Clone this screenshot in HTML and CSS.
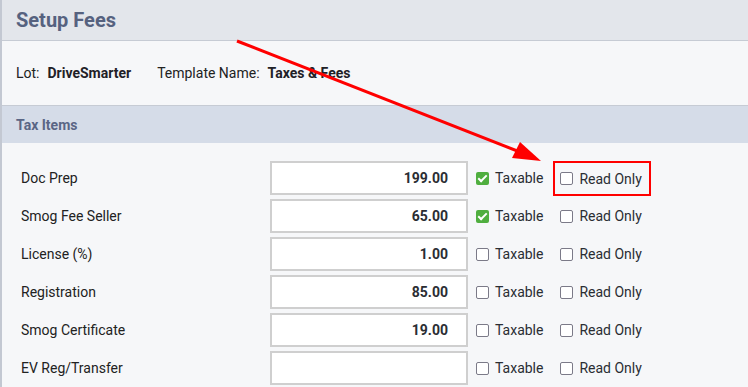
FILE: index.html
```html
<!DOCTYPE html>
<html lang="en">
<head>
    <meta charset="UTF-8">
    <title>Setup Fees</title>
    <link rel="stylesheet" href="styles.css">
</head>
<body>
    <div class="panel">
        <!-- Cabeçalho -->
        <div class="panel-header">
            <h1>Setup Fees</h1>
        </div>

        <!-- Lot / Template -->
        <div class="info-row">
            <span class="info-label">Lot:</span>
            <span class="info-value">DriveSmarter</span>
            <span class="info-label template">Template Name:</span>
            <span class="info-value">Taxes &amp; Fees</span>
        </div>

        <div class="section-bar">Tax Items</div>

        <!-- Itens -->
        <div class="items">
            <div class="item">
                <span class="item-name">Doc Prep</span>
                <div class="amount">199.00</div>
                <label class="check"><span class="box checked"></span>Taxable</label>
                <label class="check ro highlight"><span class="box"></span>Read Only</label>
            </div>
            <div class="item">
                <span class="item-name">Smog Fee Seller</span>
                <div class="amount">65.00</div>
                <label class="check"><span class="box checked"></span>Taxable</label>
                <label class="check ro"><span class="box"></span>Read Only</label>
            </div>
            <div class="item">
                <span class="item-name">License (%)</span>
                <div class="amount">1.00</div>
                <label class="check"><span class="box"></span>Taxable</label>
                <label class="check ro"><span class="box"></span>Read Only</label>
            </div>
            <div class="item">
                <span class="item-name">Registration</span>
                <div class="amount">85.00</div>
                <label class="check"><span class="box"></span>Taxable</label>
                <label class="check ro"><span class="box"></span>Read Only</label>
            </div>
            <div class="item">
                <span class="item-name">Smog Certificate</span>
                <div class="amount">19.00</div>
                <label class="check"><span class="box"></span>Taxable</label>
                <label class="check ro"><span class="box"></span>Read Only</label>
            </div>
            <div class="item">
                <span class="item-name">EV Reg/Transfer</span>
                <div class="amount"></div>
                <label class="check"><span class="box"></span>Taxable</label>
                <label class="check ro"><span class="box"></span>Read Only</label>
            </div>
        </div>

        <!-- Seta de anotação -->
        <svg class="arrow" width="748" height="387" viewBox="0 0 748 387">
            <line x1="237" y1="41" x2="520" y2="152" stroke="#ff0000" stroke-width="3"/>
            <polygon points="541,161 512,158 520,142" fill="#ff0000"/>
        </svg>
    </div>
</body>
</html>
```

FILE: styles.css
```css
/* Geral */
body {
    margin: 0;
    font-family: Roboto, "Liberation Sans", Arial, sans-serif;
    background-color: #f6f7f9;
}

.panel {
    position: relative;
    width: 748px;
    height: 387px;
    overflow: hidden;
    border-left: 2px solid #c3c8d2;
    box-sizing: border-box;
    background-color: #f6f7f9;
}

/* Cabeçalho */
.panel-header {
    height: 40px;
    background-color: #e3e6eb;
    border-bottom: 1px solid #c6cbd4;
    display: flex;
    align-items: center;
    padding-left: 14px;
}

.panel-header h1 {
    margin: 0;
    font-size: 20px;
    font-weight: 700;
    color: #56627f;
}

/* Lot / Template */
.info-row {
    height: 64px;
    display: flex;
    align-items: center;
    padding-left: 14px;
    font-size: 14px;
    color: #222;
    border-bottom: 1px solid #c6cbd4;
}

.info-label {
    margin-right: 8px;
}

.info-label.template {
    margin-left: 26px;
}

.info-value {
    font-weight: 700;
    color: #1f2127;
}

/* Barra de seção */
.section-bar {
    height: 37px;
    background-color: #d5dce8;
    display: flex;
    align-items: center;
    padding-left: 14px;
    font-size: 14px;
    font-weight: 700;
    color: #5a6685;
}

/* Itens */
.items {
    padding-top: 18px;
    display: flex;
    flex-direction: column;
    gap: 4px;
}

.item {
    height: 34px;
    display: flex;
    align-items: center;
    font-size: 14px;
    color: #222;
}

.item-name {
    width: 249px;
    padding-left: 19px;
}

.amount {
    width: 198px;
    height: 34px;
    box-sizing: border-box;
    border: 2px solid #cfcfcf;
    background-color: #fff;
    display: flex;
    align-items: center;
    justify-content: flex-end;
    padding-right: 18px;
    font-weight: 700;
    color: #2a2d33;
}

.check {
    display: flex;
    align-items: center;
    gap: 6px;
    margin-left: 8px;
    height: 34px;
    box-sizing: border-box;
    color: #2a2d33;
}

.check.ro {
    margin-left: 17px;
}

.check.highlight {
    align-self: flex-start;
    margin-left: 10px;
    padding: 0 7px 0 5px;
    border: 2px solid #ff0000;
    height: 35px;
}

.box {
    width: 13px;
    height: 13px;
    box-sizing: border-box;
    border: 1.5px solid #7b7a88;
    border-radius: 2px;
    background-color: #fff;
}

.box.checked {
    border: none;
    background-color: #4fae3f;
    position: relative;
}

.box.checked::after {
    content: "";
    position: absolute;
    left: 4px;
    top: 1px;
    width: 3px;
    height: 7px;
    border: solid #fff;
    border-width: 0 2px 2px 0;
    transform: rotate(45deg);
}

/* Seta */
.arrow {
    position: absolute;
    left: -2px;
    top: 0;
    pointer-events: none;
}
```
